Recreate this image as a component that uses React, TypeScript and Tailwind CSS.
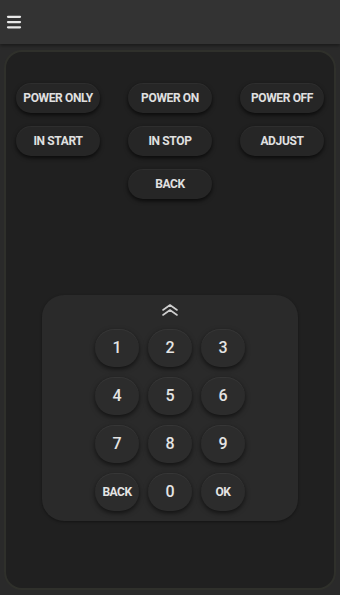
import { Menu } from 'lucide-react';

const topButtons = [
  ['POWER ONLY', 'POWER ON', 'POWER OFF'],
  ['IN START', 'IN STOP', 'ADJUST'],
];

const keys = ['1', '2', '3', '4', '5', '6', '7', '8', '9', 'BACK', '0', 'OK'];

function PillButton({ label }: { label: string }) {
  return (
    <button className="h-[30px] w-[84px] rounded-full bg-[#262626] text-[12px] font-bold tracking-[-0.03em] text-[#e0e0e0] shadow-[0_2px_4px_rgba(0,0,0,0.7),inset_0_1px_0_rgba(255,255,255,0.04)]">
      {label}
    </button>
  );
}

function Key({ label }: { label: string }) {
  const small = label.length > 1;
  return (
    <button
      className={`flex h-[38px] w-[44px] items-center justify-center rounded-full bg-[#2c2c2c] text-[#e4e4e4] shadow-[0_2px_5px_rgba(0,0,0,0.6),inset_0_1px_0_rgba(255,255,255,0.05)] ${
        small ? 'text-[12px] font-bold tracking-[-0.04em]' : 'text-[16px] font-medium'
      }`}
    >
      {label}
    </button>
  );
}

export default function App() {
  return (
    <div className="flex h-[595px] w-[340px] flex-col bg-[#2a2a2a] font-['Roboto',sans-serif]">
      {/* Toolbar */}
      <div className="flex h-[44px] shrink-0 items-center bg-[#333333] px-[5px] shadow-[0_2px_3px_rgba(0,0,0,0.35)]">
        <Menu className="h-[18px] w-[18px] text-[#e8e8e8]" strokeWidth={3} />
      </div>

      {/* Remote body */}
      <div className="flex flex-1 px-[4px] pb-[5px] pt-[6px]">
        <div className="flex flex-1 flex-col items-center rounded-[18px] border-2 border-[#2f302b] bg-[#202020] px-[8px] pt-[31px]">
          <div className="flex w-full flex-col gap-[13px]">
            {topButtons.map((row, i) => (
              <div key={i} className="flex justify-between px-[2px]">
                {row.map((b) => (
                  <PillButton key={b} label={b} />
                ))}
              </div>
            ))}
            <div className="flex justify-center">
              <PillButton label="BACK" />
            </div>
          </div>

          {/* Keypad */}
          <div className="mt-[96px] flex h-[226px] w-[256px] flex-col items-center rounded-[22px] bg-[#2a2a2a] pt-[7px] shadow-[0_1px_3px_rgba(0,0,0,0.4)]">
            <svg width="20" height="16" viewBox="0 0 20 16" fill="none" stroke="#cfcfcf" strokeWidth="1.6" strokeLinecap="round" strokeLinejoin="round">
              <polyline points="3,8 10,3 17,8" />
              <polyline points="3,13 10,8 17,13" />
            </svg>
            <div className="mt-[11px] grid grid-cols-3 gap-x-[9px] gap-y-[10px]">
              {keys.map((k) => (
                <Key key={k} label={k} />
              ))}
            </div>
          </div>
        </div>
      </div>
    </div>
  );
}
